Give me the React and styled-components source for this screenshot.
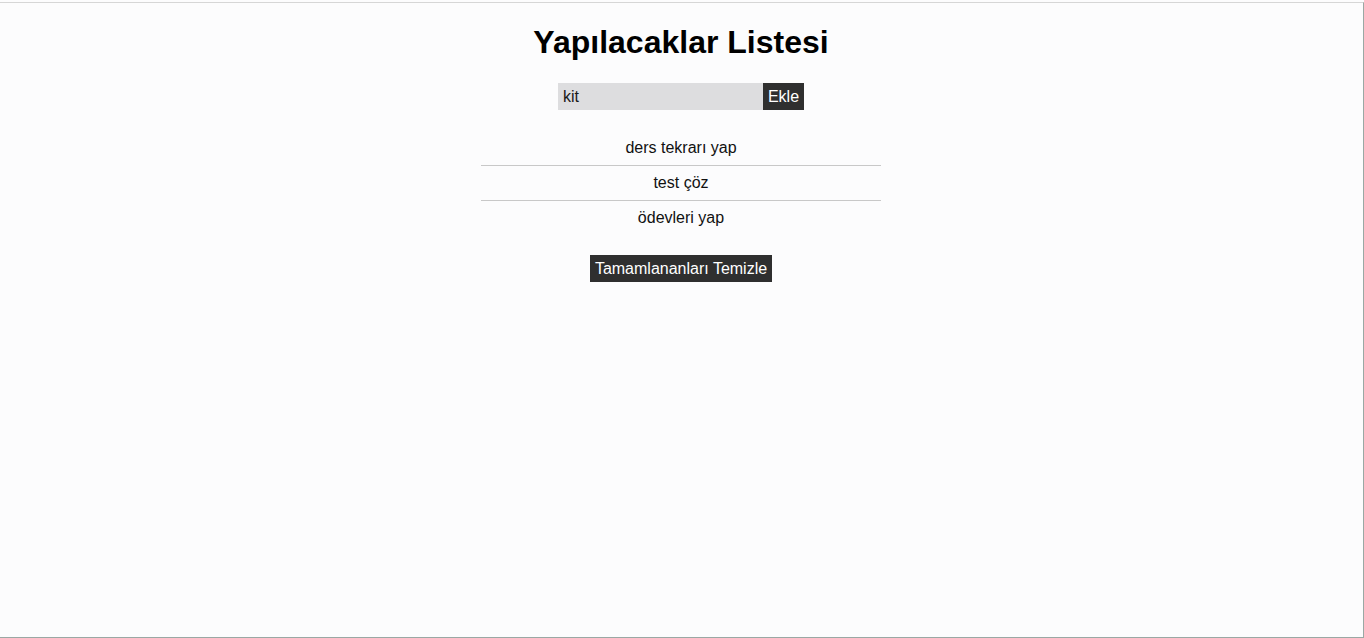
import React, { useState } from 'react';
import styled, { createGlobalStyle } from 'styled-components';

const GlobalStyle = createGlobalStyle`
  html, body {
    margin: 0;
    padding: 0;
    background: #fcfcfd;
    font-family: "Liberation Sans", Arial, sans-serif;
  }
`;

const Page = styled.main`
  min-height: 636px;
  box-sizing: border-box;
  border-top: 1px solid #d6d6d6;
  border-right: 1px solid #9aa8a4;
  border-bottom: 1px solid #9aa8a4;
  margin-top: 2px;
  display: flex;
  flex-direction: column;
  align-items: center;
  padding-top: 21px;
  padding-right: 1px;
`;

const Heading = styled.h1`
  font-size: 32px;
  line-height: 37px;
  margin: 0 0 22px;
  color: #000;
`;

const Form = styled.form`
  display: flex;
`;

const Input = styled.input`
  width: 205px;
  height: 27px;
  box-sizing: border-box;
  border: none;
  outline: none;
  background: #dddddf;
  padding: 0 5px;
  font-family: inherit;
  font-size: 16px;
  color: #1a1a1a;
`;

const Button = styled.button`
  height: 27px;
  border: none;
  padding: 0 5px;
  background: #2f2f2f;
  color: #fff;
  font-family: inherit;
  font-size: 16px;
  cursor: pointer;
`;

const List = styled.ul`
  list-style: none;
  width: 400px;
  margin: 21px 0 20px;
  padding: 0;
`;

const Item = styled.li`
  height: 34px;
  line-height: 34px;
  text-align: center;
  font-size: 16px;
  color: #111;
  border-bottom: 1px solid #c8c8c8;
  text-decoration: ${p => (p.done ? 'line-through' : 'none')};

  &:last-child {
    border-bottom: none;
  }
`;

export default function App() {
    const [text, setText] = useState('kit');
    const [todos, setTodos] = useState([
        { text: 'ders tekrarı yap', done: false },
        { text: 'test çöz', done: false },
        { text: 'ödevleri yap', done: false },
    ]);

    return (
        <>
            <GlobalStyle />
            <Page>
                <Heading>Yapılacaklar Listesi</Heading>
                <Form onSubmit={(e) => {
                    e.preventDefault();
                    if (!text.trim()) return;
                    setTodos([...todos, { text, done: false }]);
                    setText('');
                }}>
                    <Input value={text} onChange={(e) => setText(e.target.value)} />
                    <Button type="submit">Ekle</Button>
                </Form>
                <List>
                    {todos.map((t, i) => (
                        <Item
                            key={i}
                            done={t.done}
                            onClick={() => setTodos(todos.map((x, j) => (j === i ? { ...x, done: !x.done } : x)))}
                        >
                            {t.text}
                        </Item>
                    ))}
                </List>
                <Button onClick={() => setTodos(todos.filter(t => !t.done))}>
                    Tamamlananları Temizle
                </Button>
            </Page>
        </>
    );
}
